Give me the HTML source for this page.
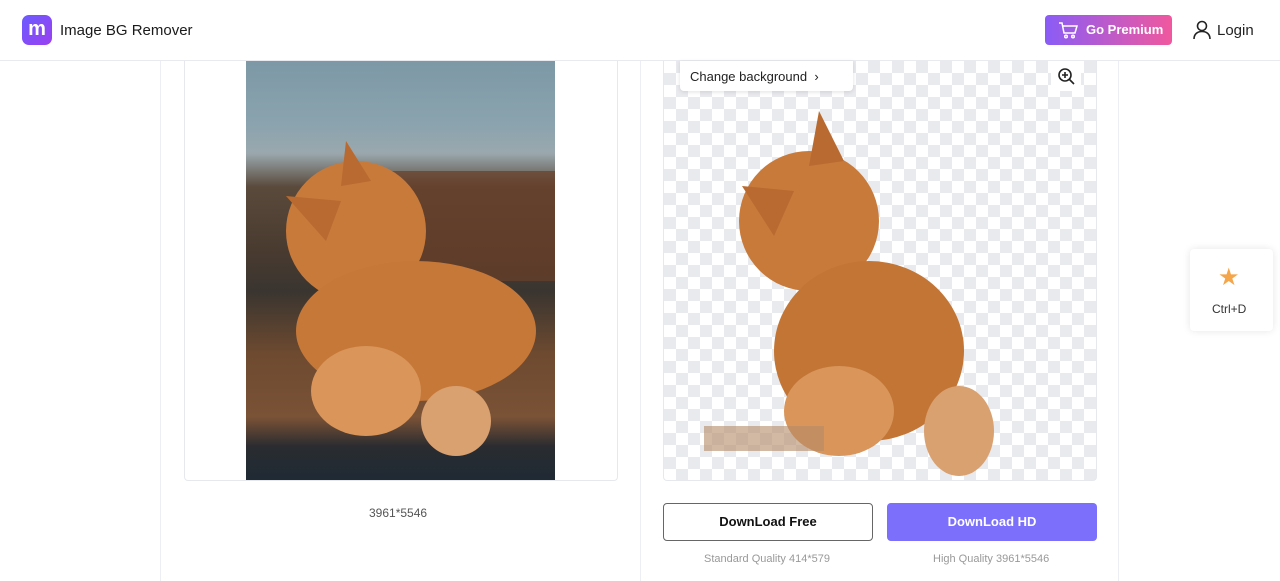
<!DOCTYPE html>
<html><head><meta charset="utf-8"><style>
*{margin:0;padding:0;box-sizing:border-box}
body{width:1280px;height:580px;overflow:hidden;background:#fff;font-family:"Liberation Sans",sans-serif;position:relative;color:#222}
.hdr{position:absolute;left:0;top:0;width:1280px;height:61px;border-bottom:1px solid #e8eaf0;background:#fff}
.logo{position:absolute;left:22px;top:15px;width:30px;height:30px;border-radius:7px;background:linear-gradient(135deg,#6a5cff,#9b3ff0);color:#fff;font-weight:bold;font-size:20px;text-align:center;line-height:28px}
.title{position:absolute;left:60px;top:22px;font-size:15px;color:#1a1a1a}
.prem{position:absolute;left:1045px;top:15px;width:127px;height:30px;border-radius:4px;background:linear-gradient(90deg,#8a5cf6,#f0589e);color:#fff;font-weight:bold;font-size:13px;line-height:30px;padding-left:41px}
.login{position:absolute;left:1217px;top:22px;font-size:15px}
.vl{position:absolute;top:61px;width:1px;height:520px;background:#eceef5}
.box{position:absolute;top:61px;height:420px;border:1px solid #e6e8ee;border-top:none;border-radius:0 0 4px 4px}
.chk{background-color:#fff;background-image:linear-gradient(45deg,#e9eaee 25%,transparent 25%,transparent 75%,#e9eaee 75%),linear-gradient(45deg,#e9eaee 25%,transparent 25%,transparent 75%,#e9eaee 75%);background-size:24px 24px;background-position:0 0,12px 12px}
.btn{position:absolute;top:503px;height:38px;border-radius:4px;font-size:13px;font-weight:bold;text-align:center;line-height:36px}
.cap{position:absolute;top:553px;font-size:11px;color:#999}
</style></head><body>
<div class="hdr">
<div class="logo">m</div><div class="title">Image BG Remover</div>
<div class="prem"><svg style="position:absolute;left:13px;top:6px" width="20" height="18" viewBox="0 0 20 18" fill="none" stroke="#fff" stroke-width="1.5"><path d="M1 2h3l2 10h11l2-7H5"/><circle cx="8" cy="15.5" r="1.3"/><circle cx="15" cy="15.5" r="1.3"/></svg>Go Premium</div>
<svg style="position:absolute;left:1193px;top:20px" width="18" height="20" viewBox="0 0 18 20" fill="none" stroke="#222" stroke-width="1.6"><circle cx="9" cy="6" r="4.5"/><path d="M1 19c0-5 3.5-7.5 8-7.5s8 2.5 8 7.5"/></svg>
<div class="login">Login</div>
</div>
<div class="vl" style="left:160px"></div><div class="vl" style="left:640px"></div><div class="vl" style="left:1118px"></div>
<div class="box" style="left:184px;width:434px"></div>
<div style="position:absolute;left:246px;top:61px;width:309px;height:419px;overflow:hidden;background:linear-gradient(180deg,#7d98a6 0%,#8aa3ae 15%,#9aa8ae 22%,#5a4a3c 30%,#4a3b30 45%,#3a3530 55%,#6e4a30 70%,#7a5236 85%,#2a2c30 92%,#1f2a34 100%)">
<svg width="309" height="419" viewBox="0 0 309 419"><rect x="80" y="110" width="229" height="110" fill="#6a3e28" opacity=".7"/><ellipse cx="110" cy="170" rx="70" ry="70" fill="#c87a3a"/><ellipse cx="170" cy="270" rx="120" ry="70" fill="#c67838"/><ellipse cx="120" cy="330" rx="55" ry="45" fill="#d9955a"/><ellipse cx="210" cy="360" rx="35" ry="35" fill="#d9a070"/><path d="M40 135 L95 140 L80 180Z" fill="#b86a30"/><path d="M100 80 L125 120 L95 125Z" fill="#b86a30"/></svg></div>
<div class="cap" style="left:369px;top:506px;font-size:12px;color:#555">3961*5546</div>
<div class="box chk" style="left:663px;width:434px;background-color:#fff">
<svg style="position:absolute;left:0;top:0" width="434" height="419" viewBox="0 0 434 419"><ellipse cx="145" cy="160" rx="70" ry="70" fill="#c87a3a"/><ellipse cx="205" cy="290" rx="95" ry="90" fill="#c27535"/><ellipse cx="175" cy="350" rx="55" ry="45" fill="#d9955a"/><ellipse cx="295" cy="370" rx="35" ry="45" fill="#d9a070"/><path d="M78 125 L130 130 L110 175Z" fill="#b86a30"/><path d="M155 50 L180 100 L145 105Z" fill="#b86a30"/><rect x="40" y="365" width="120" height="25" fill="#b48b68" opacity=".6"/></svg>
<div style="position:absolute;left:16px;top:0;width:173px;height:30px;background:#fff;border-radius:0 0 4px 4px;box-shadow:0 1px 4px rgba(0,0,0,.12);font-size:13px;line-height:32px;padding-left:10px">Change background&nbsp;&nbsp;›</div>
<div style="position:absolute;left:387px;top:0;width:30px;height:30px;background:#fff;border-radius:0 0 4px 4px"><svg style="position:absolute;left:6px;top:6px" width="18" height="18" viewBox="0 0 18 18" fill="none" stroke="#222" stroke-width="1.6"><circle cx="8" cy="8" r="6"/><path d="M12.5 12.5L17 17M8 5v6M5 8h6"/></svg></div>
</div>
<div class="btn" style="left:663px;width:210px;border:1px solid #666;color:#111">DownLoad Free</div>
<div class="btn" style="left:887px;width:210px;background:#7b6ffc;color:#fff;line-height:38px">DownLoad HD</div>
<div class="cap" style="left:704px">Standard Quality 414*579</div>
<div class="cap" style="left:933px">High Quality 3961*5546</div>
<div style="position:absolute;left:1190px;top:249px;width:83px;height:82px;background:#fff;border-radius:4px;box-shadow:0 0 8px rgba(0,0,0,.1)">
<div style="position:absolute;left:28px;top:14px;font-size:24px;color:#f5a54a">★</div>
<div style="position:absolute;left:22px;top:53px;font-size:12px;color:#333">Ctrl+D</div></div>
</body></html>
